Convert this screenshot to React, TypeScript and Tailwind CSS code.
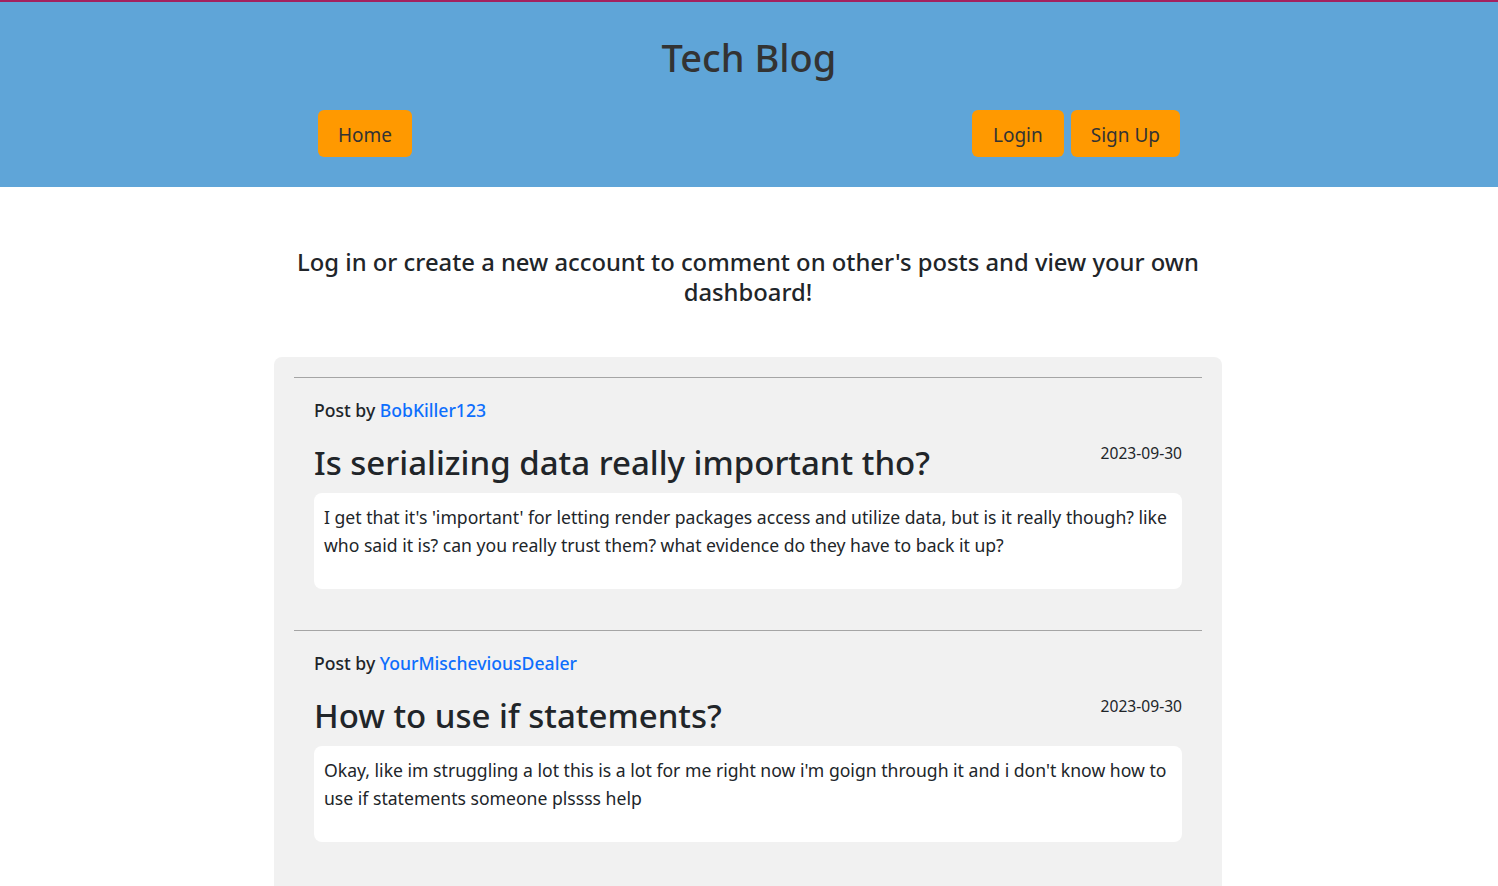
const posts = [
  {
    author: 'BobKiller123',
    title: 'Is serializing data really important tho?',
    date: '2023-09-30',
    body: "I get that it's 'important' for letting render packages access and utilize data, but is it really though? like who said it is? can you really trust them? what evidence do they have to back it up?",
  },
  {
    author: 'YourMischeviousDealer',
    title: 'How to use if statements?',
    date: '2023-09-30',
    body: "Okay, like im struggling a lot this is a lot for me right now i'm goign through it and i don't know how to use if statements someone plssss help",
  },
];

export default function App() {
  return (
    <div className="min-h-screen bg-white font-['Noto_Sans',sans-serif] text-[#212529]">
      <header className="border-t-2 border-[#a3225f] bg-[#5fa5d8] pb-[30px]">
        <h1 className="pt-[30px] text-center text-[38px] leading-[50px] font-medium text-[#333]">Tech Blog</h1>
        <nav className="mx-auto mt-[28px] flex w-[862px] items-center justify-between">
          <a className="rounded-md bg-[#ff9900] px-[20px] pt-[11px] pb-[7px] text-[19px] leading-[29px] text-[#333]">Home</a>
          <div className="flex gap-[7px]">
            <a className="rounded-md bg-[#ff9900] px-[21px] pt-[11px] pb-[7px] text-[19px] leading-[29px] text-[#333]">Login</a>
            <a className="rounded-md bg-[#ff9900] px-[20px] pt-[11px] pb-[7px] text-[19px] leading-[29px] text-[#333]">Sign Up</a>
          </div>
        </nav>
      </header>

      <main className="mx-auto w-[948px] -translate-x-px">
        <h4 className="mt-[60px] text-center text-[23.8px] leading-[30px] font-medium">
          Log in or create a new account to comment on other's posts and view your own dashboard!
        </h4>

        <section className="mt-[50px] rounded-lg bg-[#f1f1f1] px-5 pt-5 pb-10">
          {posts.map((post) => (
            <article key={post.title} className="mb-[41px]">
              <hr className="border-t border-[#a5a5a5]" />
              <div className="px-5 pt-[20px]">
                <p className="text-[17.6px] leading-[24px] font-medium">
                  Post by <a className="text-[#0d6efd]">{post.author}</a>
                </p>
                <div className="mt-[21px] flex items-start justify-between">
                  <h2 className="text-[33px] leading-[40px] font-medium">{post.title}</h2>
                  <span className="mt-[1px] text-[15.6px] leading-[18px]">{post.date}</span>
                </div>
                <div className="mt-[10px] rounded-lg bg-white px-[10px] pt-[10px] pb-[30px]">
                  <p className="text-[17.6px] leading-[28px]">{post.body}</p>
                </div>
              </div>
            </article>
          ))}
        </section>
      </main>
    </div>
  );
}
